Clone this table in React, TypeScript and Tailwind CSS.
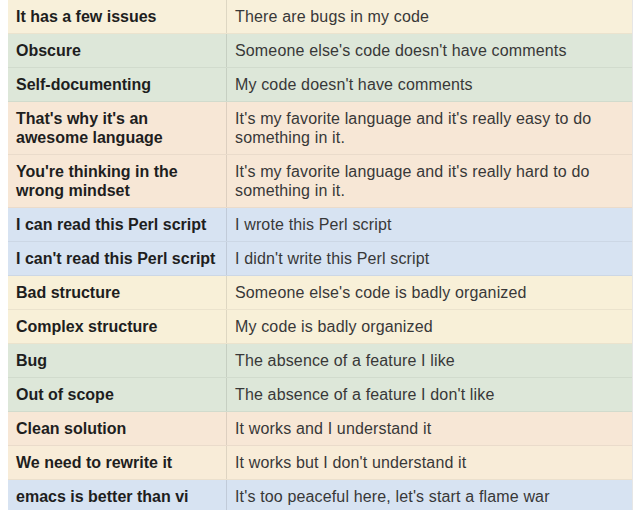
const rows: { term: string; meaning: string; bg: string }[] = [
  { term: "It has a few issues", meaning: "There are bugs in my code", bg: "bg-[#f8f0da]" },
  { term: "Obscure", meaning: "Someone else's code doesn't have comments", bg: "bg-[#dde7d9]" },
  { term: "Self-documenting", meaning: "My code doesn't have comments", bg: "bg-[#dde7d9]" },
  { term: "That's why it's an awesome language", meaning: "It's my favorite language and it's really easy to do something in it.", bg: "bg-[#f7e7d6]" },
  { term: "You're thinking in the wrong mindset", meaning: "It's my favorite language and it's really hard to do something in it.", bg: "bg-[#f7e7d6]" },
  { term: "I can read this Perl script", meaning: "I wrote this Perl script", bg: "bg-[#d7e3f2]" },
  { term: "I can't read this Perl script", meaning: "I didn't write this Perl script", bg: "bg-[#d7e3f2]" },
  { term: "Bad structure", meaning: "Someone else's code is badly organized", bg: "bg-[#f8f0d8]" },
  { term: "Complex structure", meaning: "My code is badly organized", bg: "bg-[#f8f0d8]" },
  { term: "Bug", meaning: "The absence of a feature I like", bg: "bg-[#dde7d9]" },
  { term: "Out of scope", meaning: "The absence of a feature I don't like", bg: "bg-[#dde7d9]" },
  { term: "Clean solution", meaning: "It works and I understand it", bg: "bg-[#f7e7d6]" },
  { term: "We need to rewrite it", meaning: "It works but I don't understand it", bg: "bg-[#f8ecd8]" },
  { term: "emacs is better than vi", meaning: "It's too peaceful here, let's start a flame war", bg: "bg-[#d7e3f2]" },
]

const App = () => {
  return (
    <div className="w-[641px] h-[510px] overflow-hidden bg-white pl-2 font-['Liberation_Sans',Arial,sans-serif]">
      <div className="w-[625px] border-r border-[#e6e6e6]">
        {rows.map((row) => (
          <div key={row.term} className={`grid grid-cols-[219px_1fr] border-b border-black/5 ${row.bg}`}>
            <div className="px-2 py-[7px] text-[16px] leading-[19px] font-bold text-[#1e1e1e] border-r border-black/10">
              {row.term}
            </div>
            <div className="px-2 py-[7px] text-[16px] leading-[19px] tracking-[0.15px] text-[#383838]">
              {row.meaning}
            </div>
          </div>
        ))}
      </div>
    </div>
  )
}

export default App
